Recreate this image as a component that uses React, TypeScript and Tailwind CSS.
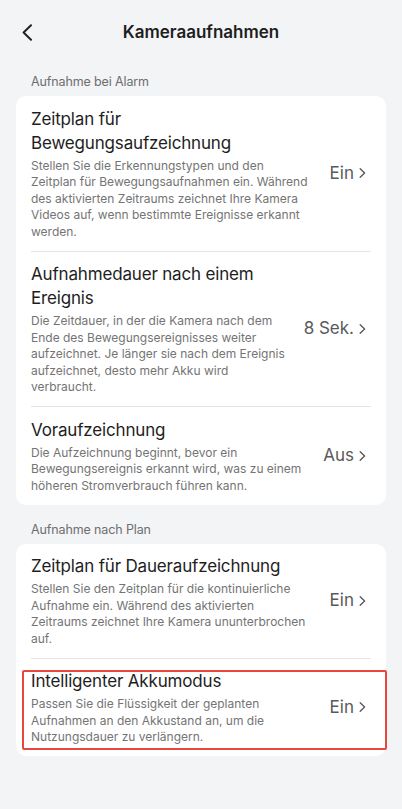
import React from 'react'

type Item = {
  title: string
  desc: string[]
  value: string
  highlight?: boolean
}

// description lines are kept as they break on the device
const alarmItems: Item[] = [
  {
    title: 'Zeitplan für Bewegungsaufzeichnung',
    desc: [
      'Stellen Sie die Erkennungstypen und den',
      'Zeitplan für Bewegungsaufnahmen ein. Während',
      'des aktivierten Zeitraums zeichnet Ihre Kamera',
      'Videos auf, wenn bestimmte Ereignisse erkannt',
      'werden.',
    ],
    value: 'Ein',
  },
  {
    title: 'Aufnahmedauer nach einem Ereignis',
    desc: [
      'Die Zeitdauer, in der die Kamera nach dem',
      'Ende des Bewegungsereignisses weiter',
      'aufzeichnet. Je länger sie nach dem Ereignis',
      'aufzeichnet, desto mehr Akku wird',
      'verbraucht.',
    ],
    value: '8 Sek.',
  },
  {
    title: 'Voraufzeichnung',
    desc: [
      'Die Aufzeichnung beginnt, bevor ein',
      'Bewegungsereignis erkannt wird, was zu einem',
      'höheren Stromverbrauch führen kann.',
    ],
    value: 'Aus',
  },
]

const planItems: Item[] = [
  {
    title: 'Zeitplan für Daueraufzeichnung',
    desc: [
      'Stellen Sie den Zeitplan für die kontinuierliche',
      'Aufnahme ein. Während des aktivierten',
      'Zeitraums zeichnet Ihre Kamera ununterbrochen',
      'auf.',
    ],
    value: 'Ein',
  },
  {
    title: 'Intelligenter Akkumodus',
    desc: [
      'Passen Sie die Flüssigkeit der geplanten',
      'Aufnahmen an den Akkustand an, um die',
      'Nutzungsdauer zu verlängern.',
    ],
    value: 'Ein',
    highlight: true,
  },
]

function ChevronRight() {
  return (
    <svg width="7" height="10" viewBox="0 0 7 10" fill="none" className="shrink-0">
      <path d="M1.2 0.8 L5.6 5 L1.2 9.2" stroke="#555" strokeWidth="1.3" strokeLinecap="round" strokeLinejoin="round" />
    </svg>
  )
}

function Row({ item, first }: { item: Item; first: boolean }) {
  return (
    <div className="relative">
      {!first && <div className="mx-[15px] h-px bg-[#e4e4e6]" />}
      <div className="flex items-center gap-3 pl-[15px] pr-[20px] py-[10.5px]">
        <div className="flex-1 min-w-0">
          <div className="text-[17px] leading-[24px] tracking-[-0.01em] text-[#1e1e1e]">{item.title}</div>
          <p className="mt-[3px] text-[12px] leading-[16.5px] text-[#747474]">
            {item.desc.map((line) => (
              <span key={line} className="block whitespace-nowrap">
                {line}
              </span>
            ))}
          </p>
        </div>
        <div className="flex items-center gap-[5px] shrink-0">
          <span className="text-[17px] text-[#5a5a5a]">{item.value}</span>
          <ChevronRight />
        </div>
      </div>
      {/* red annotation frame */}
      {item.highlight && (
        <div className="pointer-events-none absolute left-[6px] right-[-1px] top-[12px] bottom-[6px] border-2 border-[#e8473d] rounded-[2px]" />
      )}
    </div>
  )
}

function Section({ label, items, className }: { label: string; items: Item[]; className?: string }) {
  return (
    <div className={className}>
      <div className="px-[31px] text-[12.5px] leading-[16px] tracking-[-0.01em] text-[#6e6e6e]">{label}</div>
      <div className="mx-4 mt-[6px] rounded-[10px] bg-white">
        {items.map((item, i) => (
          <Row key={item.title} item={item} first={i === 0} />
        ))}
      </div>
    </div>
  )
}

export default function App() {
  return (
    <div
      className="min-h-[809px] w-full bg-[#f3f4f6]"
      style={{ fontFamily: 'Inter, "Noto Sans", "Liberation Sans", sans-serif' }}
    >
      {/* Header */}
      <div className="relative flex h-[66px] items-center justify-center">
        <button className="absolute left-[20px] top-[24px] p-0">
          <svg width="14" height="17" viewBox="0 0 14 17" fill="none">
            <path d="M11 1.2 L3.6 8.5 L11 15.8" stroke="#222" strokeWidth="2" strokeLinecap="round" strokeLinejoin="round" />
          </svg>
        </button>
        <h1 className="text-[17px] font-semibold text-[#1e1e1e]">Kameraaufnahmen</h1>
      </div>

      <Section label="Aufnahme bei Alarm" items={alarmItems} className="pt-2" />
      <Section label="Aufnahme nach Plan" items={planItems} className="mt-[17px]" />
    </div>
  )
}
